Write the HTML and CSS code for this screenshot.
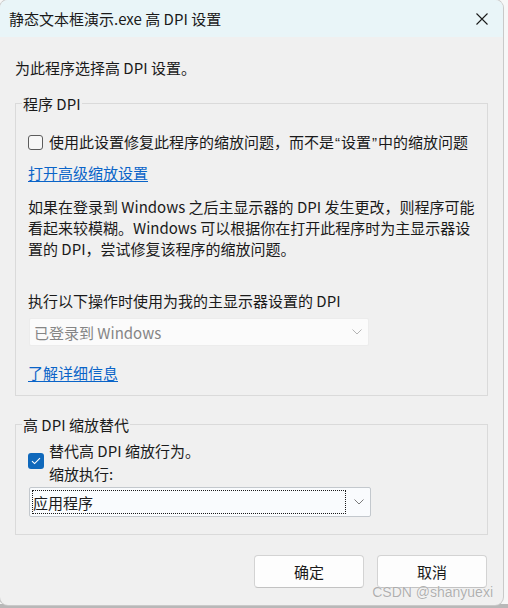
FILE: index.html
```html
<!DOCTYPE html>
<html lang="zh-CN">
<head>
<meta charset="utf-8">
<title>高 DPI 设置</title>
<link rel="stylesheet" href="styles.css">
</head>
<body>
<div class="screen">
  <div class="window">
    <div class="titlebar">
      <span class="title">静态文本框演示.exe 高 DPI 设置</span>
      <svg class="close" width="12" height="12" viewBox="0 0 12 12"><path d="M0.5 0.5 L11.5 11.5 M11.5 0.5 L0.5 11.5" stroke="#1b1b1b" stroke-width="1.1" fill="none"/></svg>
    </div>
    <div class="content">
      <p class="intro">为此程序选择高 DPI 设置。</p>

      <fieldset class="group group-dpi">
        <legend class="legend">程序 DPI</legend>
        <div class="group-inner">
          <label class="check-row">
            <span class="checkbox"></span>
            <span class="check-text">使用此设置修复此程序的缩放问题，而不是<span class="q">“</span>设置<span class="q">”</span>中的缩放问题</span>
          </label>
          <a class="link link-advanced" href="#">打开高级缩放设置</a>
          <p class="para">如果在登录到 Windows 之后主显示器的 DPI 发生更改，则程序可能<br>看起来较模糊。Windows 可以根据你在打开此程序时为主显示器设<br>置的 DPI，尝试修复该程序的缩放问题。</p>
          <p class="label-when">执行以下操作时使用为我的主显示器设置的 DPI</p>
          <div class="select select-disabled">
            <span class="select-text">已登录到 Windows</span>
            <svg class="chev" width="10" height="6" viewBox="0 0 10 6"><path d="M0.5 0.5 L5 5 L9.5 0.5" stroke="#b4b4b4" stroke-width="1" fill="none"/></svg>
          </div>
          <a class="link link-more" href="#">了解详细信息</a>
        </div>
      </fieldset>

      <fieldset class="group group-override">
        <legend class="legend">高 DPI 缩放替代</legend>
        <div class="group-inner">
          <label class="check-row check-row-two">
            <span class="checkbox checkbox-on"><svg width="10" height="8" viewBox="0 0 10 8"><path d="M1 4.2 L3.6 6.6 L9 1.2" stroke="#ffffff" stroke-width="1.1" fill="none"/></svg></span>
            <span class="check-text check-text-two">替代高 DPI 缩放行为。<br>缩放执行:</span>
          </label>
          <div class="select select-active">
            <span class="select-focus"><span class="select-text">应用程序</span></span>
            <svg class="chev" width="10" height="6" viewBox="0 0 10 6"><path d="M0.5 0.5 L5 5 L9.5 0.5" stroke="#7a7a7a" stroke-width="1" fill="none"/></svg>
          </div>
        </div>
      </fieldset>

      <div class="buttons">
        <button class="btn">确定</button>
        <button class="btn">取消</button>
      </div>
    </div>
  </div>
  <div class="watermark">CSDN @shanyuexi</div>
</div>
</body>
</html>
```
FILE: styles.css
```css
html, body {
  margin: 0;
  padding: 0;
}
body {
  width: 508px;
  height: 608px;
  overflow: hidden;
  background: #cfcfcf;
  font-family: "Noto Sans CJK SC", "Noto Sans", sans-serif;
  font-size: 15px;
  color: #1a1a1a;
}
.screen {
  position: relative;
  width: 508px;
  height: 608px;
  background: linear-gradient(to bottom, #f7f7f7 0, #f7f7f7 604px, #b8b8b8 604px);
}
.window {
  width: 503px;
  height: 605px;
  background: #f0f0f0;
  border-radius: 8px;
  overflow: hidden;
  box-shadow: 0 0 0 1px #c9c9c9;
  display: flex;
  flex-direction: column;
}
.titlebar {
  height: 37px;
  flex: none;
  background: #e9f5f8;
  display: flex;
  align-items: center;
  padding: 0 15px 0 9px;
}
.title {
  flex: 1;
  line-height: 21px;
  margin-top: -1px;
}
.close {
  display: block;
  margin-top: 1px;
}
.content {
  padding: 0 15px;
  display: flex;
  flex-direction: column;
}
.intro {
  margin: 20px 0 0 0;
  line-height: 21px;
}
.group {
  margin: 15px 0 0 0;
  padding: 0;
  border: 1px solid #dadada;
  min-width: 0;
}
.legend {
  margin-left: 6px;
  padding: 0 1px;
  line-height: 21px;
}
.group-inner {
  padding: 0 12px;
  display: flex;
  flex-direction: column;
  align-items: flex-start;
}
.group-dpi .group-inner {
  padding-bottom: 12px;
}
.group-override {
  margin-top: 18px;
}
.group-override .group-inner {
  padding-bottom: 17px;
}
.check-row {
  display: flex;
  align-items: center;
  gap: 6px;
  margin-top: 17px;
  line-height: 21px;
  white-space: nowrap;
}
.q {
  font-family: "Liberation Sans", Arial, sans-serif;
  padding: 0 1px;
}
.checkbox {
  width: 13px;
  height: 13px;
  border: 1px solid #5c5c5c;
  border-radius: 3px;
  background: #f7f7f7;
  flex: none;
  display: flex;
  align-items: center;
  justify-content: center;
}
.checkbox-on {
  width: 16px;
  height: 16px;
  border: none;
  background: #0f68bb;
}
.check-row-two {
  align-items: flex-start;
  margin-top: 4px;
  gap: 5px;
}
.check-row-two .checkbox {
  margin-top: 14px;
}
.check-text-two {
  line-height: 23px;
}
.link {
  color: #0a64c8;
  text-decoration: underline;
  text-underline-offset: 2px;
  line-height: 21px;
}
.link-advanced {
  margin-top: 9px;
}
.link-more {
  margin-top: 16px;
}
.para {
  margin: 13px 0 0 0;
  line-height: 21px;
  white-space: nowrap;
}
.label-when {
  margin: 31px 0 0 0;
  line-height: 21px;
}
.select {
  box-sizing: border-box;
  margin-left: 1px;
  display: flex;
  align-items: center;
  justify-content: space-between;
}
.select-disabled {
  margin-top: 7px;
  width: 340px;
  height: 28px;
  background: #fbfbfb;
  border: 1px solid #ececec;
  border-radius: 2px;
  padding: 0 6px 0 4px;
  color: #858585;
}
.select-active {
  margin-top: 2px;
  width: 342px;
  height: 30px;
  background: #f9fbfd;
  border: 1px solid #c3c8cd;
  border-radius: 2px;
  padding: 0 6px 0 2px;
}
.select-focus {
  box-sizing: border-box;
  width: 314px;
  height: 24px;
  border: 1px dotted #1a1a1a;
  display: flex;
  align-items: center;
  padding-left: 0;
}
.select-text {
  line-height: 21px;
}
.chev {
  display: block;
}
.buttons {
  display: flex;
  justify-content: flex-end;
  gap: 13px;
  margin-top: 20px;
  padding-right: 1px;
}
.btn {
  width: 110px;
  height: 33px;
  background: #fdfdfd;
  border: 1px solid #d3d3d3;
  border-bottom-color: #c2c2c2;
  border-radius: 4px;
  font-family: "Noto Sans CJK SC", "Noto Sans", sans-serif;
  font-size: 15px;
  color: #1a1a1a;
  padding: 0;
}
.watermark {
  position: absolute;
  right: 15px;
  top: 584px;
  line-height: 16px;
  font-family: "Liberation Sans", Arial, sans-serif;
  font-size: 14px;
  color: rgba(150, 150, 150, 0.75);
  text-shadow: 0 0 1px #ffffff;
}
```
